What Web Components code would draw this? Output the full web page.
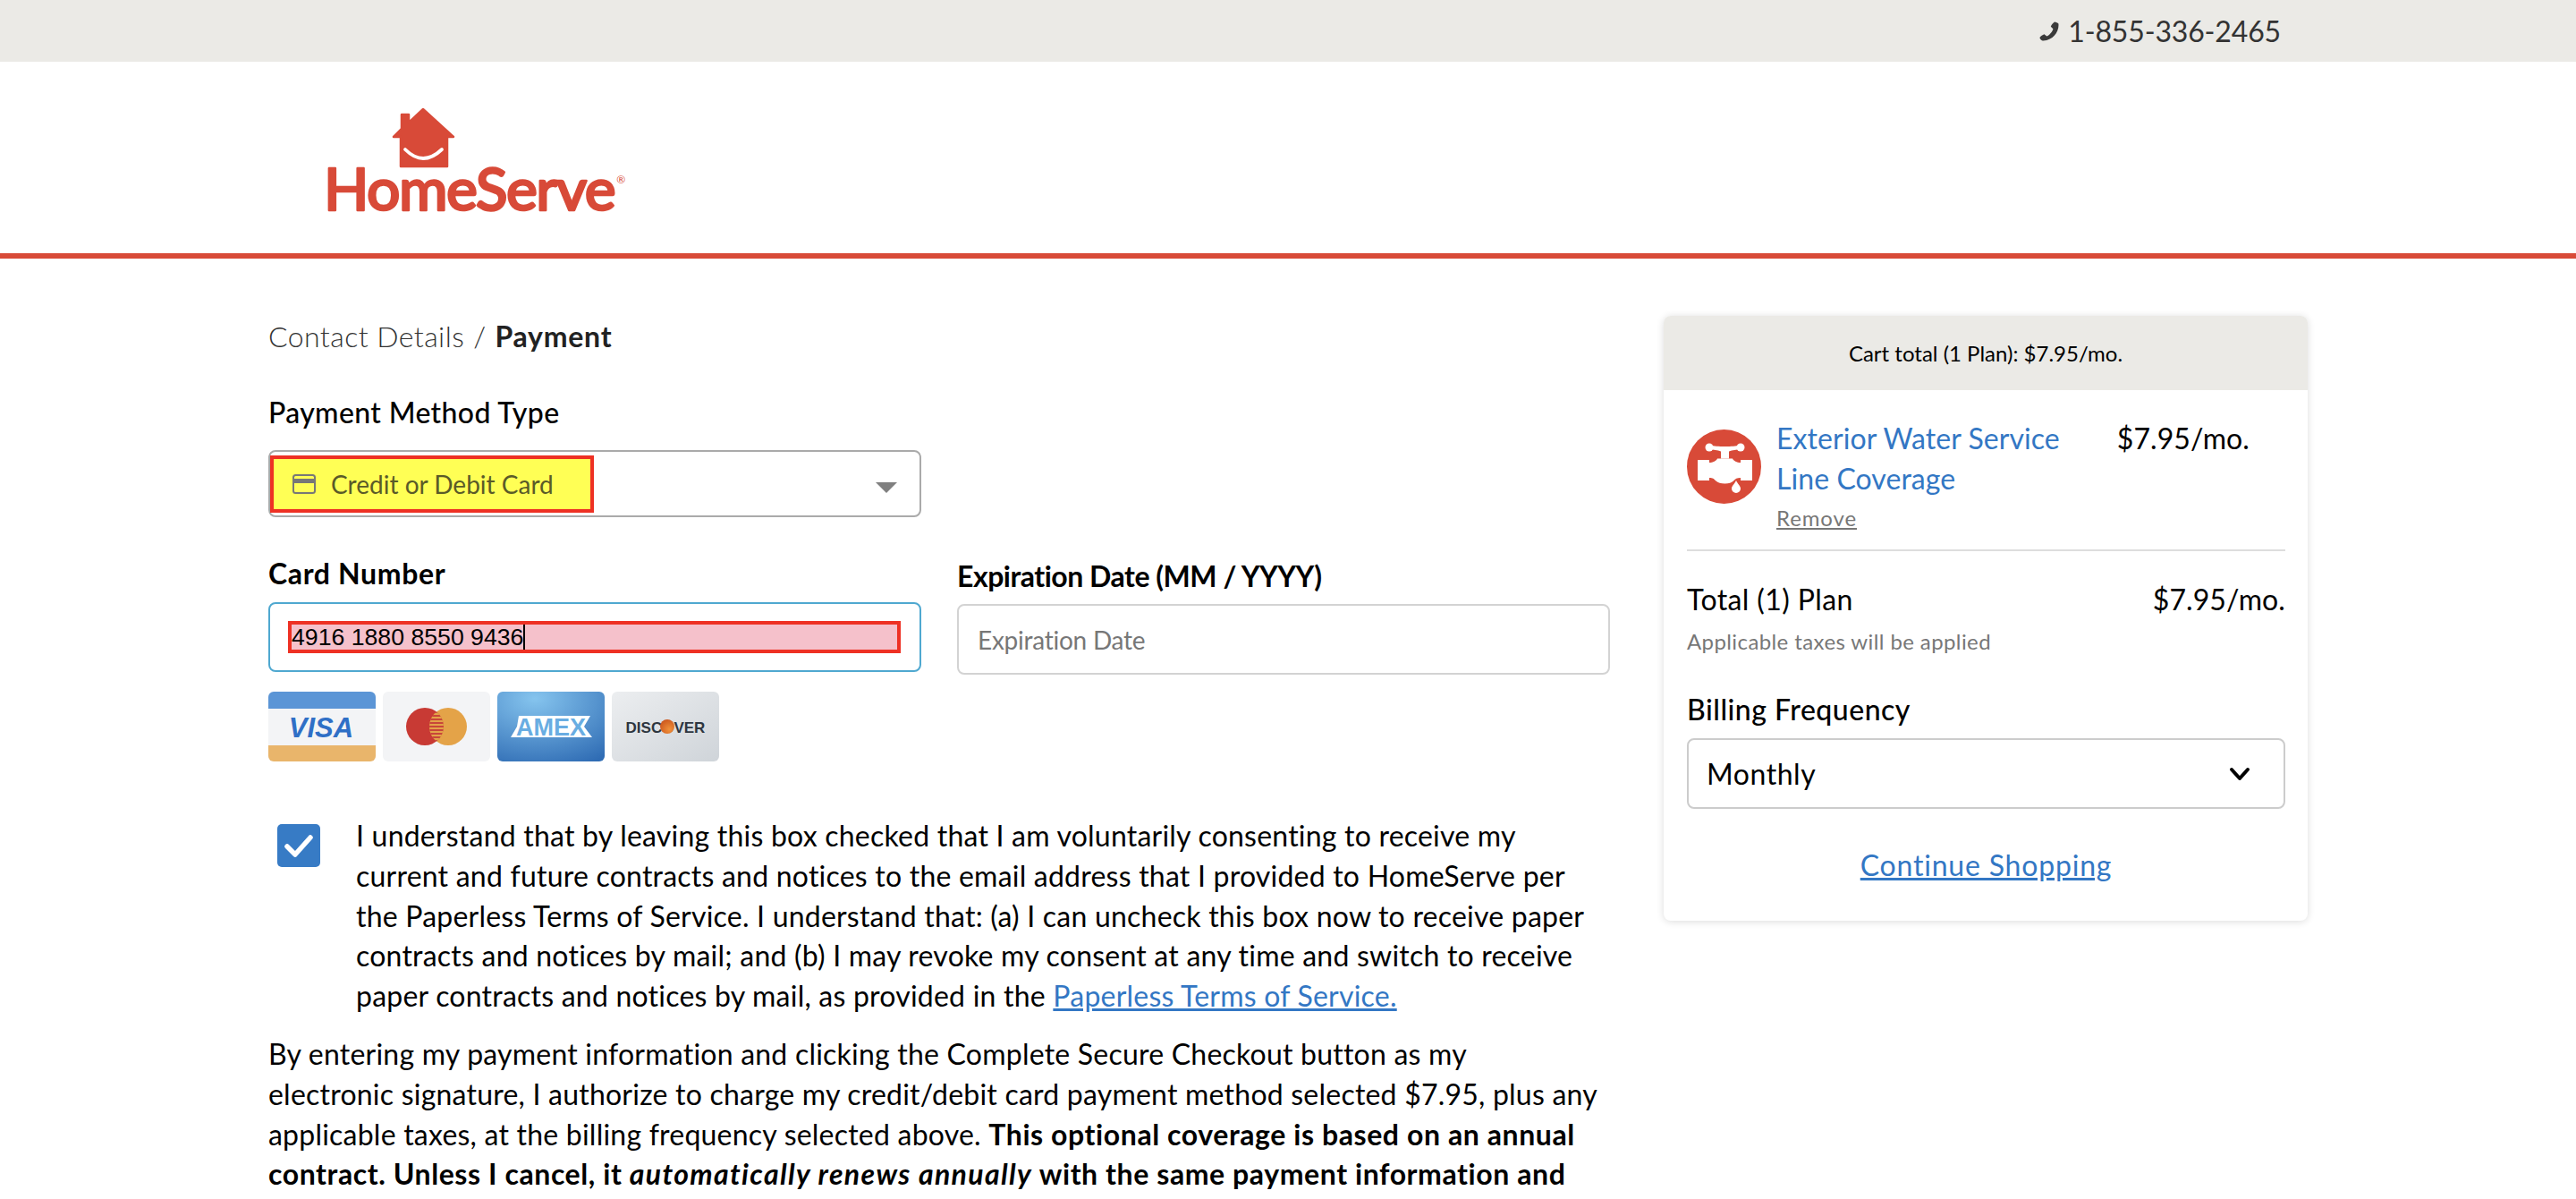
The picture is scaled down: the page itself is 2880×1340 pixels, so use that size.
<!DOCTYPE html>
<html lang="en">
<head>
<meta charset="utf-8">
<title>HomeServe Payment</title>
<style>
  html, body { margin: 0; padding: 0; height: 1340px; overflow: hidden; background: #fff; }
  body { font-family: 'Lato', 'Open Sans', sans-serif; font-size: 32px; color: #000; }
</style>
</head>
<body>
<hs-topbar phone="1-855-336-2465"></hs-topbar>
<hs-header></hs-header>
<hs-checkout></hs-checkout>

<script>
class HsTopbar extends HTMLElement {
    constructor() {
        super();
        this.shadow = this.attachShadow({ mode: 'open' });
    }

    connectedCallback() {
        this.shadow.innerHTML = `
            <style>
                :host {
                    display: flex;
                    justify-content: flex-end;
                    align-items: center;
                    height: 69px;
                    background-color: #ebeae6;
                    padding-right: 330px;
                    color: #333;
                    font-size: 32px;
                }
                .phone { width: 22px; height: 22px; margin-right: 10px; fill: #3a3a3a; }
                span { letter-spacing: -0.15px; }
            </style>
            <svg class="phone" viewBox="0 0 22 22">
                <path d="M17 .5c1.600.2 3.600 1 4.400 2.100.5 4.500-1.200 9.300-4.600 13.200C13.200 19.700 8 21.800 3.600 21.500 2.200 21 .8 19.400.4 17.900c1.200-1.500 3.300-3 5-3.700l3 2.300c2.800-1.200 6.300-5.300 7-8.300l-2.600-2.500c.5-1.800 2.800-4.300 4.200-5.200z"/>
            </svg>
            <span>${this.getAttribute('phone')}</span>
        `;
    }
}
customElements.define('hs-topbar', HsTopbar);

class HsHeader extends HTMLElement {
    constructor() {
        super();
        this.shadow = this.attachShadow({ mode: 'open' });
    }

    connectedCallback() {
        this.shadow.innerHTML = `
            <style>
                :host {
                    display: block;
                    height: 220px;
                    box-sizing: border-box;
                    padding: 51px 0 0 365px;
                    border-bottom: 6px solid #d84a38;
                    background-color: #fff;
                }
                svg { display: block; width: 350px; height: 135px; overflow: visible; }
            </style>
            <svg viewBox="0 0 350 135">
                <path fill="#d84a38" stroke="#d84a38" stroke-width="2.500" stroke-linejoin="round" d="M108 2 142 33H135V66H83V33H75L84 24V8H92V17z"/>
                <path fill="none" stroke="#fff" stroke-width="3.800" stroke-linecap="round" d="M88 47Q108 67 129 47"/>
                <text x="-3" y="115" font-family="Lato, sans-serif" font-size="66" font-weight="500" letter-spacing="-1.500" fill="#d84a38" stroke="#d84a38" stroke-width="2.400" stroke-linejoin="round">HomeServe<tspan font-size="12" font-weight="400" stroke-width="0" dx="2" dy="-30" letter-spacing="0">®</tspan></text>
            </svg>
        `;
    }
}
customElements.define('hs-header', HsHeader);

class HsField extends HTMLElement {
    constructor() {
        super();
        this.shadow = this.attachShadow({ mode: 'open' });
    }

    connectedCallback() {
        const bold = this.hasAttribute('bold');
        this.shadow.innerHTML = `
            <style>
                :host { display: block; }
                label {
                    display: block;
                    line-height: 45px;
                    font-weight: ${bold ? 700 : 500};
                    letter-spacing: var(--label-ls, 0);
                    white-space: nowrap;
                }
                .box {
                    box-sizing: border-box;
                    border: 2px solid var(--border, #d3d3d3);
                    border-radius: 8px;
                    background: #fff;
                    height: var(--box-h, 78px);
                    margin-top: var(--gap, 10px);
                    display: flex;
                    align-items: center;
                    position: relative;
                }
            </style>
            <label>${this.getAttribute('label')}</label>
            <div class="box"><slot></slot></div>
        `;
    }
}
customElements.define('hs-field', HsField);

class HsCardLogos extends HTMLElement {
    constructor() {
        super();
        this.shadow = this.attachShadow({ mode: 'open' });
    }

    connectedCallback() {
        this.shadow.innerHTML = `
            <style>
                :host { display: flex; gap: 8px; }
                svg { display: block; width: 120px; height: 78px; border-radius: 6px; }
            </style>
            <svg viewBox="0 0 120 78">
                <rect width="120" height="78" fill="#f3f4f6"/>
                <rect width="120" height="19" fill="#5b95d6"/>
                <rect y="60" width="120" height="18" fill="#e9b56b"/>
                <text x="59" y="51" text-anchor="middle" font-family="'Liberation Sans', sans-serif" font-style="italic" font-weight="700" font-size="31" fill="#2f6fc6">VISA</text>
            </svg>
            <svg viewBox="0 0 120 78">
                <defs>
                    <clipPath id="lens"><path d="M60 22.500A21 21 0 0 1 60 55.500 21 21 0 0 1 60 22.500z"/></clipPath>
                </defs>
                <rect width="120" height="78" fill="#f3f4f6"/>
                <circle cx="47" cy="39" r="21" fill="#c83a34"/>
                <circle cx="73" cy="39" r="21" fill="#e4a348"/>
                <g clip-path="url(#lens)">
                    <rect x="50" y="20" width="20" height="38" fill="#c8463a"/>
                    <path stroke="#e4a348" stroke-width="1.800" d="M50 25h20M50 29h20M50 33h20M50 37h20M50 41h20M50 45h20M50 49h20M50 53h20"/>
                </g>
            </svg>
            <svg viewBox="0 0 120 78">
                <defs>
                    <radialGradient id="ax" cx="0.35" cy="0.1" r="1.050">
                        <stop offset="0" stop-color="#85c4ee"/>
                        <stop offset="1" stop-color="#2f6cb4"/>
                    </radialGradient>
                </defs>
                <rect width="120" height="78" fill="url(#ax)"/>
                <path fill="#fff" d="M24 27h80l-7 12 9 12H15l7-12z"/>
                <text x="60" y="49" text-anchor="middle" font-family="'Liberation Sans', sans-serif" font-weight="700" font-size="27" fill="#69ade2">AMEX</text>
            </svg>
            <svg viewBox="0 0 120 78">
                <defs>
                    <linearGradient id="dc" x1="0" y1="0" x2="1" y2="1">
                        <stop offset="0" stop-color="#eceef0"/>
                        <stop offset="1" stop-color="#cfd4d9"/>
                    </linearGradient>
                    <radialGradient id="dco" cx="0.65" cy="0.7" r="0.8">
                        <stop offset="0" stop-color="#f0913a"/>
                        <stop offset="1" stop-color="#c9531c"/>
                    </radialGradient>
                </defs>
                <rect width="120" height="78" fill="url(#dc)"/>
                <text x="60" y="45.500" text-anchor="middle" font-family="'Liberation Sans', sans-serif" font-weight="700" font-size="17" fill="#2e3640">DISCOVER</text>
                <circle cx="62" cy="39" r="8" fill="url(#dco)"/>
            </svg>
        `;
    }
}
customElements.define('hs-card-logos', HsCardLogos);

class HsPaymentForm extends HTMLElement {
    constructor() {
        super();
        this.shadow = this.attachShadow({ mode: 'open' });
    }

    connectedCallback() {
        this.shadow.innerHTML = `
            <style>
                :host { display: block; width: 1500px; }
                .crumbs {
                    line-height: 45px;
                    color: #333;
                    font-weight: 300;
                    letter-spacing: 0.43px;
                }
                .crumbs b { color: #222; font-weight: 700; margin-left: 10px; letter-spacing: 0.75px; }
                .crumbs i { font-style: normal; margin-left: 10px; }
                .method { margin-top: 40px; width: 730px; --box-h: 75px; --gap: 20px; --border: #aaa; --label-ls: 0.37px; }
                .marked {
                    box-sizing: border-box;
                    position: absolute;
                    left: 0;
                    top: 4px;
                    width: 362px;
                    height: 64px;
                    border: 4px solid #ee3124;
                    background: #ffff55;
                    display: flex;
                    align-items: center;
                    padding-left: 21px;
                    color: #5a5a28;
                    font-size: 28px;
                    white-space: nowrap;
                }
                .marked svg { width: 26px; height: 22px; margin-right: 17px; flex: none; }
                .arrow {
                    position: absolute;
                    right: 25px;
                    top: 34px;
                    width: 0;
                    height: 0;
                    border-left: 12px solid transparent;
                    border-right: 12px solid transparent;
                    border-top: 12px solid #808080;
                }
                .row { display: flex; gap: 40px; margin-top: 40px; }
                .card { width: 730px; --border: #4fa8d0; --label-ls: 0.65px; }
                .exp { width: 730px; padding-top: 3px; --gap: 9px; --box-h: 79px; --label-ls: -0.48px; }
                .typed {
                    box-sizing: border-box;
                    margin: 0 21px 0 20px;
                    flex: 1;
                    height: 36px;
                    border: 4px solid #ee3124;
                    background: #f5c1cb;
                    font: 26.67px/28px 'Liberation Sans', Arial, sans-serif;
                    color: #000;
                    display: flex;
                    align-items: center;
                }
                .caret { width: 2px; height: 28px; background: #000; }
                .placeholder { margin-left: 21px; color: #777; font-size: 28px; letter-spacing: -0.25px; }
                hs-card-logos { margin-top: 19px; }
                .consent { display: flex; margin-top: 61px; }
                .check {
                    flex: none;
                    width: 48px;
                    height: 48px;
                    margin: 9px 40px 0 10px;
                    border-radius: 5px;
                    background: #377bc5;
                }
                .check svg { display: block; width: 48px; height: 48px; }
                p { margin: 0; line-height: 44.8px; white-space: nowrap; letter-spacing: 0.22px; }
                p b { letter-spacing: 0.58px; }
                p b i { letter-spacing: 1.35px; }
                .terms { margin-top: 20px; }
                a { color: #3377c4; text-decoration: underline; }
            </style>
            <div class="crumbs">Contact Details<i>/</i><b>Payment</b></div>

            <hs-field class="method" label="Payment Method Type">
                <div class="marked">
                    <svg viewBox="0 0 26 22">
                        <rect x="1" y="1" width="24" height="20" rx="2.500" fill="none" stroke="#777" stroke-width="2"/>
                        <rect x="1" y="5" width="24" height="5" fill="#777"/>
                    </svg>
                    Credit or Debit Card
                </div>
                <div class="arrow"></div>
            </hs-field>

            <div class="row">
                <hs-field class="card" label="Card Number" bold>
                    <div class="typed">4916 1880 8550 9436<span class="caret"></span></div>
                </hs-field>
                <hs-field class="exp" label="Expiration Date (MM / YYYY)" bold>
                    <span class="placeholder">Expiration Date</span>
                </hs-field>
            </div>

            <hs-card-logos></hs-card-logos>

            <div class="consent">
                <div class="check">
                    <svg viewBox="0 0 48 48"><path fill="none" stroke="#fff" stroke-width="5.500" stroke-linecap="round" stroke-linejoin="round" d="M11 25l9 9 17-19"/></svg>
                </div>
                <p>I understand that by leaving this box checked that I am voluntarily consenting to receive my<br>
                current and future contracts and notices to the email address that I provided to HomeServe per<br>
                the Paperless Terms of Service. I understand that: (a) I can uncheck this box now to receive paper<br>
                contracts and notices by mail; and (b) I may revoke my consent at any time and switch to receive<br>
                paper contracts and notices by mail, as provided in the <a href="#">Paperless Terms of Service.</a></p>
            </div>

            <p class="terms">By entering my payment information and clicking the Complete Secure Checkout button as my<br>
            electronic signature, I authorize to charge my credit/debit card payment method selected $7.95, plus any<br>
            applicable taxes, at the billing frequency selected above. <b>This optional coverage is based on an annual<br>
            contract. Unless I cancel, it <i>automatically renews annually</i> with the same payment information and</b></p>
        `;
    }
}
customElements.define('hs-payment-form', HsPaymentForm);

class HsCartSummary extends HTMLElement {
    constructor() {
        super();
        this.shadow = this.attachShadow({ mode: 'open' });
    }

    connectedCallback() {
        this.shadow.innerHTML = `
            <style>
                :host {
                    display: block;
                    width: 720px;
                    height: 676px;
                    box-sizing: border-box;
                    background: #fff;
                    border-radius: 8px;
                    box-shadow: 0 1px 8px rgba(0,0,0,0.14);
                    overflow: hidden;
                }
                .head {
                    height: 83px;
                    background-color: #ebeae6;
                    display: flex;
                    align-items: center;
                    justify-content: center;
                    font-size: 24px;
                }
                .body { padding: 31px 25px 0 26px; }
                .item { display: flex; }
                .item svg { width: 83px; height: 83px; margin: 13px 17px 0 0; flex: none; }
                .item .name { flex: 1; }
                .title { color: #3377c4; line-height: 45px; letter-spacing: 0.07px; }
                .remove { display: block; color: #777; font-size: 24px; line-height: 34px; margin-top: 5px; text-decoration: underline; letter-spacing: 0.9px; }
                .price { line-height: 45px; margin-right: 40px; letter-spacing: 0.1px; }
                hr { border: 0; height: 2px; background: #ddd; margin: 18px 0 31px; }
                .total { display: flex; justify-content: space-between; line-height: 45px; letter-spacing: 0.1px; }
                .total span:first-child { letter-spacing: 0.4px; }
                .tax { color: #777; font-size: 24px; line-height: 34px; margin-top: 8px; letter-spacing: 0.4px; }
                .freq { margin-top: 36px; --box-h: 79px; --gap: 10px; --border: #ccc; --label-ls: 0.5px; }
                .monthly { margin-left: 20px; flex: 1; letter-spacing: 0.55px; }
                .chev { width: 26px; height: 16px; margin-right: 36px; }
                .cont { display: block; text-align: center; color: #3377c4; line-height: 45px; margin-top: 40px; text-decoration: underline; letter-spacing: 0.8px; }
            </style>
            <div class="head">Cart total (1 Plan): $7.95/mo.</div>
            <div class="body">
                <div class="item">
                    <svg viewBox="0 0 83 83">
                        <circle cx="41.500" cy="41.500" r="41.500" fill="#d84a38"/>
                        <g fill="#fff">
                            <circle cx="25" cy="20" r="4.500"/>
                            <circle cx="60" cy="20" r="4.500"/>
                            <path d="M25 17.500c6 1 10 1.500 17.500 1.500S54 18.500 60 17.500v5c-5 0-9 .5-13 2v8h-9v-8c-4-1.500-8-2-13-2z"/>
                            <path d="M12 34h13v3c4 0 8-2 9-4.500h17c1 2.500 5 4.500 9 4.500v-3h13v23H60v-3c-4 0-6 1-8 3.500-2 2-5 3-9.500 3s-8-1-10-3C30 55 29 54 25 54v3H12z"/>
                            <path d="M55 57c2 4 5 6.500 5 9a5 5 0 0 1-10 0c0-2.500 3-5 5-9z"/>
                        </g>
                    </svg>
                    <div class="name">
                        <div class="title">Exterior Water Service<br>Line Coverage</div>
                        <a class="remove">Remove</a>
                    </div>
                    <div class="price">$7.95/mo.</div>
                </div>
                <hr>
                <div class="total"><span>Total (1) Plan</span><span>$7.95/mo.</span></div>
                <div class="tax">Applicable taxes will be applied</div>
                <hs-field class="freq" label="Billing Frequency">
                    <span class="monthly">Monthly</span>
                    <svg class="chev" viewBox="0 0 26 16"><path fill="none" stroke="#000" stroke-width="4" stroke-linecap="round" stroke-linejoin="round" d="M4 3l9 10 9-10"/></svg>
                </hs-field>
                <a class="cont">Continue Shopping</a>
            </div>
        `;
    }
}
customElements.define('hs-cart-summary', HsCartSummary);

class HsCheckout extends HTMLElement {
    constructor() {
        super();
        this.shadow = this.attachShadow({ mode: 'open' });
    }

    connectedCallback() {
        this.shadow.innerHTML = `
            <style>
                :host {
                    display: flex;
                    align-items: flex-start;
                    gap: 60px;
                    padding: 64px 0 0 300px;
                }
            </style>
            <hs-payment-form></hs-payment-form>
            <hs-cart-summary></hs-cart-summary>
        `;
    }
}
customElements.define('hs-checkout', HsCheckout);
</script>
</body>
</html>
